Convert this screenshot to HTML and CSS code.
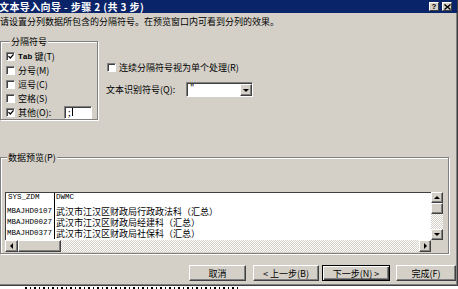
FILE: index.html
```html
<!DOCTYPE html>
<html lang="zh-CN">

<head>
    <meta charset="UTF-8">
    <title>文本导入向导 - 步骤 2 (共 3 步)</title>
    <link rel="stylesheet" href="styles.css">
</head>

<body>
    <div class="win">
        <!-- 标题栏 -->
        <div class="titlebar">
            <span class="title">文本导入向导 - 步骤 2 (共 3 步)</span>
            <span class="tbtn help">?</span>
            <span class="tbtn close">
                <svg width="7" height="6" viewBox="0 0 7 6"><path d="M0.5 0.5 L6.5 5.5 M6.5 0.5 L0.5 5.5" stroke="#000" stroke-width="1.4" fill="none"/></svg>
            </span>
        </div>

        <p class="intro">请设置分列数据所包含的分隔符号。在预览窗口内可看到分列的效果。</p>

        <div class="top">
            <!-- 分隔符号 -->
            <fieldset class="group sep">
                <legend>分隔符号</legend>
                <div class="row"><span class="chk"><svg width="7" height="7" viewBox="0 0 7 7"><path d="M0.5 3 L2.7 5.3 L6.5 1" stroke="#000" stroke-width="1.5" fill="none"/></svg></span><span class="lat">Tab</span>&nbsp;键(T)</div>
                <div class="row"><span class="chk"></span>分号(M)</div>
                <div class="row"><span class="chk"></span>逗号(C)</div>
                <div class="row"><span class="chk"></span>空格(S)</div>
                <div class="row"><span class="chk"><svg width="7" height="7" viewBox="0 0 7 7"><path d="M0.5 3 L2.7 5.3 L6.5 1" stroke="#000" stroke-width="1.5" fill="none"/></svg></span>其他(O):<span class="field">;<i class="caret"></i></span></div>
            </fieldset>

            <div class="opts">
                <div class="row"><span class="chk"></span>连续分隔符号视为单个处理(R)</div>
                <div class="row qual">
                    <span class="qlabel">文本识别符号(Q):</span>
                    <span class="combo"><span class="val">"</span><span class="drop"><i class="down"></i></span></span>
                </div>
            </div>
        </div>

        <!-- 数据预览 -->
        <fieldset class="group preview">
            <legend>数据预览(P)</legend>
            <div class="lv">
                <div class="pane">
                    <div class="line first"><span class="c1">SYS_ZDM</span><span class="c2 mono">DWMC</span></div>
                    <div class="line"><span class="c1">MBAJHD0107</span><span class="c2">武汉市江汉区财政局行政政法科（汇总）</span></div>
                    <div class="line"><span class="c1">MBAJHD0027</span><span class="c2">武汉市江汉区财政局经建科（汇总）</span></div>
                    <div class="line"><span class="c1">MBAJHD0377</span><span class="c2">武汉市江汉区财政局社保科（汇总）</span></div>
                </div>
                <div class="vscroll">
                    <span class="sbtn"><i class="up"></i></span>
                    <span class="sbtn thumb"></span>
                    <span class="track"></span>
                    <span class="sbtn"><i class="down"></i></span>
                </div>
                <div class="hscroll">
                    <span class="sbtn hl"><i class="left"></i></span>
                    <span class="sbtn hthumb"></span>
                    <span class="track"></span>
                    <span class="sbtn hr"><i class="right"></i></span>
                </div>
                <div class="corner"></div>
            </div>
        </fieldset>

        <div class="actions">
            <span class="btn cancel">取消</span>
            <span class="btn back">&lt; 上一步(B)</span>
            <span class="btn next">下一步(N) &gt;</span>
            <span class="btn finish">完成(F)</span>
        </div>
    </div>
    <!-- 下面窗口露出的一点内容 -->
    <div class="below"></div>
</body>

</html>
```

FILE: styles.css
```css
html,
body,
p,
fieldset,
legend {
    margin: 0;
    padding: 0;
}

body {
    width: 458px;
    height: 289px;
    overflow: hidden;
    background: #fff;
    font-family: "Noto Sans CJK SC", "Liberation Sans", sans-serif;
    font-size: 9px;
    line-height: 11px;
    color: #000;
}

.win {
    width: 458px;
    height: 286px;
    box-sizing: border-box;
    background: #d4d0c8;
    border-right: 1px solid #404040;
    border-bottom: 1px solid #404040;
    box-shadow: inset -1px -1px 0 #808080;
    overflow: hidden;
}

/* 标题栏 */
.titlebar {
    height: 13px;
    background: #0a246a;
    display: flex;
    align-items: center;
    padding-right: 5px;
}

.title {
    flex: 1;
    margin-left: -1px;
    color: #fff;
    font-weight: bold;
    font-size: 10px;
    letter-spacing: 0.4px;
    line-height: 13px;
    white-space: nowrap;
}

.tbtn {
    width: 10px;
    height: 9px;
    box-sizing: border-box;
    background: #d4d0c8;
    border: 1px solid;
    border-color: #fff #404040 #404040 #fff;
    display: flex;
    align-items: center;
    justify-content: center;
    font-family: "Liberation Sans", sans-serif;
    font-weight: bold;
    font-size: 8px;
    line-height: 7px;
}

.help {
    margin-right: 3px;
}

.intro {
    margin-top: 3px;
    height: 11px;
    white-space: nowrap;
}

/* 分组框 */
.group {
    border: 1px solid #808080;
    box-shadow: 1px 1px 0 #fff, inset 1px 1px 0 #fff;
    min-width: 0;
    box-sizing: border-box;
}

.group legend {
    background: #d4d0c8;
    line-height: 11px;
    height: 11px;
    padding: 0 1px;
}

.top {
    margin-top: 9px;
    display: flex;
    align-items: flex-start;
}

.sep {
    width: 98px;
    padding: 2px 5px 0 5px;
}

.sep legend {
    margin-left: 4px;
}

.row {
    height: 14px;
    display: flex;
    align-items: center;
    white-space: nowrap;
}

.chk {
    width: 9px;
    height: 9px;
    box-sizing: border-box;
    background: #fff;
    border: 1px solid;
    border-color: #808080 #fff #fff #808080;
    box-shadow: inset 1px 1px 0 #404040;
    margin-right: 3px;
    flex: none;
    display: flex;
    align-items: center;
    justify-content: center;
}

.chk svg {
    margin: 1px 0 0 1px;
}

.lat {
    font-family: "Liberation Mono", monospace;
    font-size: 8px;
    font-weight: bold;
}

.field {
    margin-left: auto;
    width: 28px;
    height: 13px;
    box-sizing: border-box;
    background: #fff;
    border: 1px solid;
    border-color: #808080 #fff #fff #808080;
    box-shadow: inset 1px 1px 0 #404040;
    padding-left: 3px;
    line-height: 11px;
    display: flex;
    align-items: center;
}

.caret {
    width: 1px;
    height: 8px;
    background: #000;
    margin-left: 1px;
}

.opts {
    margin-left: 8px;
    padding-top: 24px;
}

.opts .row:first-child {
    padding-left: 1px;
}

.qual {
    margin-top: 8px;
    height: 15px;
}

.qlabel {
    width: 80px;
}

.combo {
    width: 67px;
    height: 15px;
    box-sizing: border-box;
    background: #fff;
    border: 1px solid;
    border-color: #808080 #fff #fff #808080;
    box-shadow: inset 1px 1px 0 #404040;
    display: flex;
    padding: 1px 0 0 1px;
}

.val {
    flex: 1;
    padding-left: 2px;
    line-height: 10px;
}

.drop {
    width: 12px;
    height: 12px;
    box-sizing: border-box;
    background: #d4d0c8;
    border: 1px solid;
    border-color: #fff #404040 #404040 #fff;
    box-shadow: inset -1px -1px 0 #808080;
    display: flex;
    align-items: center;
    justify-content: center;
}

/* 三角箭头 */
.up,
.down,
.left,
.right {
    width: 0;
    height: 0;
    border: 3px solid transparent;
}

.up {
    border-top: 0;
    border-bottom-color: #000;
}

.down {
    border-bottom: 0;
    border-top-color: #000;
}

.left {
    border-left: 0;
    border-right-color: #000;
}

.right {
    border-right: 0;
    border-left-color: #000;
}

/* 数据预览 */
.preview {
    width: 449px;
    margin-top: 32px;
    padding: 29px 5px 1px 4px;
}

.preview legend {
    margin-left: 2px;
}

.lv {
    display: grid;
    grid-template-columns: 426px 12px;
    grid-template-rows: 48px 12px;
}

.pane {
    background: #fff;
    border-top: 1px solid #404040;
    border-left: 1px solid #404040;
    overflow: hidden;
}

.line {
    display: flex;
    height: 11px;
    align-items: center;
    white-space: nowrap;
}

.line.first {
    height: 13px;
    align-items: flex-start;
}

.c1 {
    width: 49px;
    flex: none;
    height: 100%;
    border-right: 1px solid #000;
    font-family: "Liberation Mono", monospace;
    font-size: 7.5px;
    padding-left: 1px;
    box-sizing: border-box;
    display: flex;
    align-items: center;
}

.first .c1 {
    align-items: flex-start;
    line-height: 8px;
    padding-left: 2px;
}

.c2 {
    padding-left: 1px;
}

.c2.mono {
    font-family: "Liberation Mono", monospace;
    font-size: 7.5px;
    line-height: 8px;
}

.sbtn {
    box-sizing: border-box;
    background: #d4d0c8;
    border: 1px solid;
    border-color: #fff #404040 #404040 #fff;
    box-shadow: inset -1px -1px 0 #808080;
    display: flex;
    align-items: center;
    justify-content: center;
    flex: none;
}

.track {
    flex: 1;
    background: repeating-conic-gradient(#fff 0 25%, #d4d0c8 0 50%) 0 0 / 2px 2px;
}

.vscroll {
    display: flex;
    flex-direction: column;
}

.vscroll .sbtn {
    height: 11px;
}

.hscroll {
    display: flex;
}

.hscroll .sbtn.hl {
    width: 13px;
}

.hthumb {
    width: 43px;
}

.hscroll .sbtn.hr {
    width: 12px;
}

.corner {
    background: #d4d0c8;
}

/* 按钮 */
.actions {
    margin-top: 11px;
    height: 16px;
    display: flex;
    justify-content: flex-end;
    padding-right: 1px;
}

.btn {
    height: 16px;
    box-sizing: border-box;
    background: #d4d0c8;
    border: 1px solid;
    border-color: #fff #404040 #404040 #fff;
    box-shadow: inset -1px -1px 0 #808080;
    display: flex;
    align-items: center;
    justify-content: center;
    white-space: nowrap;
}

.cancel {
    width: 57px;
    margin-right: 7px;
}

.back {
    width: 66px;
    margin-right: 3px;
}

.next {
    width: 68px;
    margin-right: 6px;
    border-color: #000;
    box-shadow: inset 1px 1px 0 #fff, inset -1px -1px 0 #404040, inset -2px -2px 0 #808080;
}

.finish {
    width: 60px;
}

.below {
    height: 3px;
    background: #fff repeating-linear-gradient(90deg, #000 0 2px, transparent 2px 5px, #000 5px 6px, transparent 6px 9px) 25px 1px / 215px 2px no-repeat;
}
```
